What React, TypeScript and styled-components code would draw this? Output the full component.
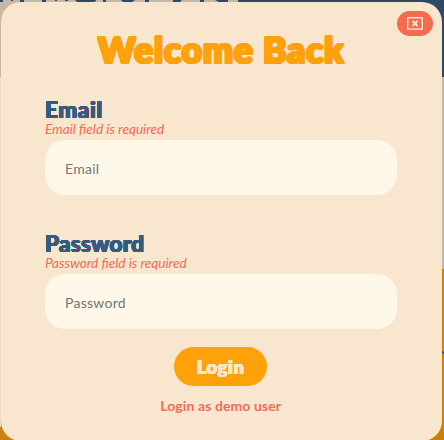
import React from "react";
import styled, { createGlobalStyle } from "styled-components";

const GlobalStyle = createGlobalStyle`
  * { box-sizing: border-box; }
  html, body { margin: 0; width: 444px; height: 440px; overflow: hidden; }
  body { font-family: Lato, sans-serif; }
  #root { height: 440px; }
`;

const Page = styled.div`
  position: relative;
  height: 440px;
  overflow: hidden;
  background:
    linear-gradient(#ecdac2, #ecdac2) 0 77px / 1px 350px no-repeat,
    linear-gradient(#c7b8a5 0 269px, #cc8108 269px);
`;

const Hero = styled.div`
  height: 77px;
  background: linear-gradient(90deg, #c7b8a5 0 240px, #2e4966 240px);
`;

const HeroMarks = styled.svg`
  display: block;
`;

const EdgeMark = styled.svg`
  position: absolute;
  right: 0;
  top: 351px;
`;

const Modal = styled.section`
  position: absolute;
  left: 0.6px;
  top: 2.3px;
  width: 441.2px;
  height: 438.4px;
  border-radius: 20px;
  background: #f8e6cf;
  padding: 0 44.4px;
  display: flex;
  flex-direction: column;
`;

const Close = styled.button`
  position: absolute;
  top: 9px;
  right: 9px;
  width: 35.5px;
  height: 25px;
  padding: 0;
  border: 0;
  border-radius: 13px;
  background: #f56b50;
  display: grid;
  place-items: center;
`;

/* Thickens the glyphs evenly in all directions, which rounds their corners. */
const roundedOutline = (r: number) =>
  Array.from({ length: 16 }, (_, i) => {
    const a = (i * Math.PI) / 8;
    return `${(Math.cos(a) * r).toFixed(2)}px ${(Math.sin(a) * r).toFixed(2)}px 0 currentColor`;
  }).join(", ");

const Rounded = styled.span<{ $size: number; $weight: number; $track: number }>`
  font-family: Lato, sans-serif;
  font-weight: 900;
  font-size: ${(p) => p.$size}px;
  letter-spacing: ${(p) => p.$track}px;
  text-shadow: ${(p) => (p.$weight ? roundedOutline(p.$weight) : "none")};
  white-space: nowrap;
`;

const Title = styled.h1`
  margin: 24px 0 0;
  height: 48px;
  line-height: 48px;
  text-align: center;
  color: #ffa10a;
`;

const Field = styled.div<{ $gap: number }>`
  margin-top: ${(p) => p.$gap}px;
  display: flex;
  flex-direction: column;
`;

const Label = styled.label`
  height: 25px;
  line-height: 25px;
  color: #365b83;
`;

const ErrorText = styled.em`
  height: 16px;
  line-height: 14px;
  font-size: 13.6px;
  color: #f56b56;
`;

const Input = styled.input`
  margin-top: 2px;
  width: 352px;
  height: 55px;
  padding: 1px 20px 0;
  border: 0;
  border-radius: 20px;
  background: #fff8e8;
  font: 14px Lato, sans-serif;
  letter-spacing: 0.28px;
  &::placeholder { color: #757575; opacity: 1; }
`;

const Login = styled.button`
  align-self: center;
  margin: 18px 1px 0 0;
  width: 93px;
  height: 39px;
  padding: 0;
  border: 0;
  border-radius: 20px;
  background: #ffa10a;
  color: #f8e6cf;
`;

const Demo = styled.a`
  margin: 10px 1px 0 0;
  height: 20px;
  line-height: 20px;
  text-align: center;
  font-size: 14px;
  font-weight: 700;
  letter-spacing: 0.1px;
  color: #f56b56;
`;

export default function App() {
  return (
    <>
      <GlobalStyle />
      <Page>
        <Hero>
          <HeroMarks width="240" height="3" fill="#2e4966">
            <path d="M0 0h3v2H0zM11 0h2v1h-2zM20 0h4v2h-4zM42 0h4v3h-4zM55 0h2v1h-2zM65 0h3v1h-3zM75 0h21v1l-2 1H77zM103 0h3v2h-3zM121 0h14l-3 2h-9zM145 0h4v2h-4zM173 0h9l-2 2h-7zM200 0h4v2h-4zM215 0h13v2h-9zM238 0h2v3h-2z" />
          </HeroMarks>
        </Hero>
        <EdgeMark width="2" height="3" fill="#2e4966">
          <path d="M0 0h1v1h1v2H1V2H0z" />
        </EdgeMark>
        <Modal>
          <Close aria-label="Close">
            <svg width="16" height="13" viewBox="0 0 16 13" fill="none" stroke="#f8e6cf">
              <rect x="0.7" y="0.7" width="14.6" height="11.4" strokeWidth="1.4" />
              <path d="M5.5 4l5 5M10.5 4l-5 5" strokeWidth="1.9" />
            </svg>
          </Close>
          <Title><Rounded $size={35.5} $weight={1.3} $track={0.85}>Welcome Back</Rounded></Title>
          <Field $gap={23}>
            <Label htmlFor="email"><Rounded $size={22.5} $weight={0.35} $track={0.6}>Email</Rounded></Label>
            <ErrorText>Email field is required</ErrorText>
            <Input id="email" placeholder="Email" />
          </Field>
          <Field $gap={36}>
            <Label htmlFor="password"><Rounded $size={22.5} $weight={0.35} $track={0.25}>Password</Rounded></Label>
            <ErrorText>Password field is required</ErrorText>
            <Input id="password" type="password" placeholder="Password" />
          </Field>
          <Login><Rounded $size={18} $weight={0.4} $track={0.8}>Login</Rounded></Login>
          <Demo>Login as demo user</Demo>
        </Modal>
      </Page>
    </>
  );
}
